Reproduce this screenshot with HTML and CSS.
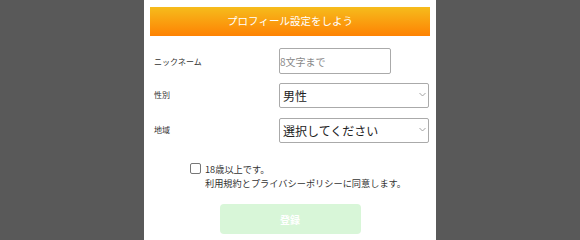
FILE: index.html
```html
<!DOCTYPE html>
<html lang="ja">
<head>
<meta charset="utf-8">
<title>プロフィール設定</title>
<link rel="stylesheet" href="styles.css">
</head>
<body>
<div class="panel">
  <div class="title">プロフィール設定をしよう</div>
  <div class="form">
    <div class="row row-nick">
      <label class="label">ニックネーム</label>
      <input class="text-input" type="text" placeholder="8文字まで">
    </div>
    <div class="row row-sex">
      <label class="label">性別</label>
      <div class="select-wrap">
        <select class="select"><option>男性</option><option>女性</option></select>
        <svg class="chev" width="7" height="5" viewBox="0 0 7 5"><path d="M0.5 1 L3.5 4 L6.5 1" fill="none" stroke="#9a9a9a" stroke-width="0.9"/></svg>
      </div>
    </div>
    <div class="row row-area">
      <label class="label">地域</label>
      <div class="select-wrap">
        <select class="select"><option>選択してください</option></select>
        <svg class="chev" width="7" height="5" viewBox="0 0 7 5"><path d="M0.5 1 L3.5 4 L6.5 1" fill="none" stroke="#9a9a9a" stroke-width="0.9"/></svg>
      </div>
    </div>
  </div>
  <div class="agree">
    <span class="check"></span>
    <div class="agree-text">18歳以上です。<br>利用規約とプライバシーポリシーに同意します。</div>
  </div>
  <div class="actions">
    <button class="submit" type="button">登録</button>
  </div>
</div>
</body>
</html>
```
FILE: styles.css
```css
html, body {
  margin: 0;
  padding: 0;
  height: 100%;
  overflow: hidden;
}
body {
  background: #595959;
  font-family: "Noto Sans CJK JP", "Noto Sans", sans-serif;
  color: #333;
}
.panel {
  width: 292px;
  height: 100%;
  margin: 0 auto;
  background: #fff;
  padding: 7px 6px 0;
  box-sizing: border-box;
}
.title {
  height: 29px;
  line-height: 28px;
  text-align: center;
  color: #fff;
  font-size: 10.5px;
  background: linear-gradient(#f6bc1c, #fe8203);
}
.form {
  margin-top: 12px;
  display: flex;
  flex-direction: column;
}
.row {
  display: grid;
  grid-template-columns: 129px 150px;
  align-items: center;
}
.row-sex { margin-top: 8px; }
.row-area { margin-top: 10px; }
.label {
  font-size: 8px;
  padding-left: 4px;
  color: #333;
}
.text-input {
  width: 112px;
  height: 26px;
  box-sizing: border-box;
  border: 1px solid #aaa;
  border-radius: 2px;
  padding: 0;
  font-family: inherit;
  font-size: 10px;
  color: #333;
  outline: none;
}
.text-input::placeholder { color: #8a8a8a; }
.select-wrap {
  position: relative;
  width: 150px;
  height: 25px;
}
.select {
  appearance: none;
  -webkit-appearance: none;
  width: 150px;
  height: 25px;
  box-sizing: border-box;
  border: 1px solid #aaa;
  border-radius: 2px;
  background: #fff;
  padding: 0 0 0 3px;
  font-family: inherit;
  font-size: 12px;
  color: #222;
  outline: none;
}
.chev {
  position: absolute;
  right: 3px;
  top: 10px;
}
.agree {
  margin-top: 20px;
  margin-left: 40px;
  display: flex;
  align-items: flex-start;
  gap: 4px;
}
.check {
  width: 9px;
  height: 9px;
  border: 1px solid #777;
  border-radius: 2px;
  margin-top: 1px;
  flex: none;
}
.agree-text {
  font-size: 9.2px;
  line-height: 14px;
  color: #333;
}
.actions {
  margin-top: 14px;
  display: flex;
  justify-content: center;
}
.submit {
  width: 141px;
  height: 30px;
  border: none;
  border-radius: 4px;
  background: #d8f6d8;
  color: #fff;
  font-family: inherit;
  font-weight: bold;
  font-size: 10px;
  padding: 0;
}
```
